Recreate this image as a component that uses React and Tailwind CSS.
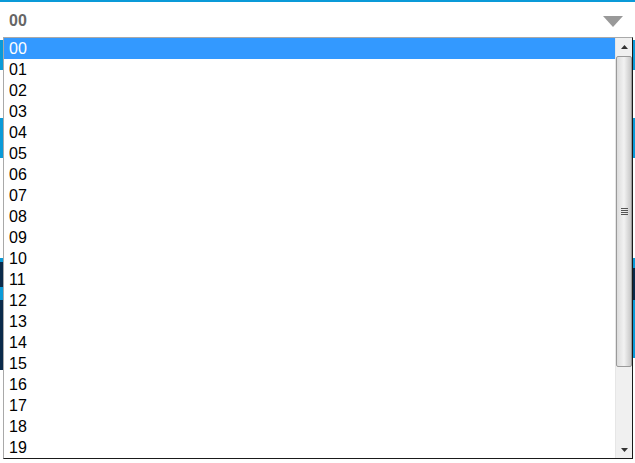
import React from "react";

const items = Array.from({ length: 20 }, (_, i) => String(i).padStart(2, "0"));

export default function App() {
  return (
    <div className="relative w-[635px] h-[463px] bg-white overflow-hidden" style={{ fontFamily: '"Liberation Sans", Arial, sans-serif' }}>
      {/* header select */}
      <div className="h-[37px] border-t-2 border-[#0a9ad8] flex items-center justify-between pl-[9px] pr-[12px]">
        <span className="text-[16px] font-bold text-[#666666] leading-none mt-[3px]">00</span>
        <svg width="20" height="11" viewBox="0 0 20 11" className="mt-[3px]">
          <polygon points="0,0 20,0 10,11" fill="#999999" />
        </svg>
      </div>
      {/* underlying page content */}
      <div className="flex flex-col">
        <div className="h-[3px]" />
        <div className="h-[30px] bg-[#0a9ad8]" />
        <div className="h-[48px]" />
        <div className="h-[40px] bg-[#0a9ad8]" />
        <div className="h-[100px]" />
        <div className="h-[100px] bg-[#0a9ad8] flex justify-between">
          <div className="w-[3px] flex flex-col">
            <div className="h-[4px]" />
            <div className="h-[25px] bg-[#0b2a4a]" />
            <div className="h-[13px]" />
            <div className="flex-1 bg-[#0b2a4a]" />
          </div>
          <div className="w-[2px] flex flex-col">
            <div className="h-[10px]" />
            <div className="h-[32px] bg-[#0b2a4a]" />
          </div>
        </div>
        <div className="h-[12px] w-[3px] bg-[#0b2a4a]" />
      </div>

      {/* open listbox */}
      <div className="absolute left-[3px] top-[37px] w-[630px] h-[422px] bg-white border-t border-l border-[#a9a9a9] border-r border-b border-r-[#1a1a1a] border-b-[#1a1a1a] flex">
        <div className="flex-1 overflow-hidden">
          {items.map((it, i) => (
            <div
              key={it}
              className={`h-[21px] leading-[22px] pl-[5px] text-[16px] ${i === 0 ? "bg-[#3399ff] text-white" : "text-black"}`}
            >
              {it}
            </div>
          ))}
        </div>
        {/* scrollbar */}
        <div className="w-[17px] bg-[#f0f0f0] border-l border-[#e6e6e6] flex flex-col">
          <div className="h-[18px] flex items-center justify-center">
            <svg width="7" height="4" viewBox="0 0 7 4">
              <polygon points="0,4 7,4 3.5,0" fill="#333" />
            </svg>
          </div>
          <div className="h-[311px] border border-[#9a9a9a] rounded-[2px] bg-gradient-to-r from-[#dcdcdc] via-[#f2f2f2] to-[#c8c8c8] flex items-center justify-center">
            <div className="flex flex-col gap-[1px]">
              <div className="w-[7px] h-[1px] bg-[#555]" />
              <div className="w-[7px] h-[1px] bg-[#555]" />
              <div className="w-[7px] h-[1px] bg-[#555]" />
              <div className="w-[7px] h-[1px] bg-[#555]" />
            </div>
          </div>
          <div className="flex-1" />
          <div className="h-[16px] flex items-center justify-center">
            <svg width="7" height="4" viewBox="0 0 7 4">
              <polygon points="0,0 7,0 3.5,4" fill="#333" />
            </svg>
          </div>
        </div>
      </div>
    </div>
  );
}
